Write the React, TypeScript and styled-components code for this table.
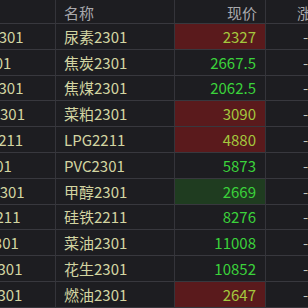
import React from 'react';
import styled, { createGlobalStyle } from 'styled-components';

interface Quote {
  code: string;
  name: string;
  price: string;
  flash?: 'up' | 'down';
}

const quotes: Quote[] = [
  { code: 'UR2301', name: '尿素2301', price: '2327', flash: 'up' },
  { code: 'J2301', name: '焦炭2301', price: '2667.5' },
  { code: 'JM2301', name: '焦煤2301', price: '2062.5' },
  { code: 'RM2301', name: '菜粕2301', price: '3090', flash: 'up' },
  { code: 'PG2211', name: 'LPG2211', price: '4880', flash: 'up' },
  { code: 'V2301', name: 'PVC2301', price: '5873' },
  { code: 'MA2301', name: '甲醇2301', price: '2669', flash: 'down' },
  { code: 'SF2211', name: '硅铁2211', price: '8276' },
  { code: 'OI2301', name: '菜油2301', price: '11008' },
  { code: 'PK2301', name: '花生2301', price: '10852' },
  { code: 'FU2301', name: '燃油2301', price: '2647', flash: 'up' },
];

const GlobalStyle = createGlobalStyle`
  html, body {
    margin: 0;
    padding: 0;
    background: #1d1d21;
  }
  body {
    font-family: 'Microsoft YaHei', 'Noto Sans CJK SC', sans-serif;
  }
`;

// the quote board is scrolled sideways, so the code column is half hidden
const Viewport = styled.div`
  width: 308px;
  height: 308px;
  overflow: hidden;
  background: #1d1d21;
`;

const Table = styled.div`
  display: grid;
  grid-template-columns: 94px 119px 91px 90px;
  grid-template-rows: 24px;
  grid-auto-rows: 25.8px;
  margin-left: -38px;
  width: max-content;
  font-size: 15px;
`;

const Cell = styled.div<{ $align?: 'left' | 'right'; $flash?: 'up' | 'down' }>`
  box-sizing: border-box;
  display: flex;
  align-items: center;
  justify-content: ${p => (p.$align === 'right' ? 'flex-end' : 'flex-start')};
  padding: 0 8px;
  border-right: 1px solid #34343a;
  border-bottom: 1px solid #38383e;
  white-space: nowrap;
  background: ${p =>
    p.$flash === 'up' ? '#5a1a1c' : p.$flash === 'down' ? '#1f3c20' : 'transparent'};
`;

const HeadCell = styled(Cell)`
  color: #a9a9ad;
  padding-top: 1px;
`;

const NameText = styled.span`
  color: #d3d5a2;
`;

const PriceText = styled.span<{ $onRed?: boolean }>`
  color: ${p => (p.$onRed ? '#a4c83e' : '#3bd23b')};
  padding-right: 1px;
`;

const ChangeHead = styled.span`
  padding-left: 23px;
`;

const Change = styled.span`
  color: #c0c6c0;
  padding-left: 29px;
`;

export default function App() {
  return (
    <Viewport>
      <GlobalStyle />
      <Table>
        <HeadCell />
        <HeadCell>名称</HeadCell>
        <HeadCell $align="right">现价</HeadCell>
        <HeadCell>
          <ChangeHead>涨跌</ChangeHead>
        </HeadCell>
        {quotes.map(q => (
          <React.Fragment key={q.code}>
            <Cell>
              <NameText>{q.code}</NameText>
            </Cell>
            <Cell>
              <NameText>{q.name}</NameText>
            </Cell>
            <Cell $align="right" $flash={q.flash}>
              <PriceText $onRed={q.flash === 'up'}>{q.price}</PriceText>
            </Cell>
            <Cell>
              <Change>-</Change>
            </Cell>
          </React.Fragment>
        ))}
      </Table>
    </Viewport>
  );
}
